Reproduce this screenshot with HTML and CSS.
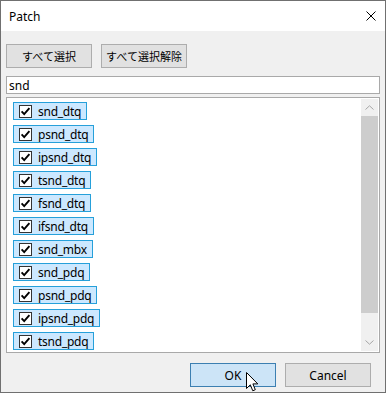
FILE: index.html
```html
<!DOCTYPE html>
<html lang="ja">

<head>
  <meta charset="UTF-8">
  <meta name="viewport" content="width=device-width, initial-scale=1.0">
  <title>Patch</title>
  <link rel="stylesheet" href="styles.css">
</head>

<body>

  <svg class="defs" width="0" height="0">
    <symbol id="tick" viewBox="0 0 11 11">
      <path d="M1.6 5.4 L4.2 8.2 L9.4 2.2" fill="none" stroke="#000" stroke-width="1.9"/>
    </symbol>
  </svg>

  <div class="window">
    <!-- Title bar -->
    <div class="titlebar">
      <span class="title">Patch</span>
      <svg class="close" width="10" height="10" viewBox="0 0 10 10">
        <path d="M0.5 0.5 L9.5 9.5 M9.5 0.5 L0.5 9.5" stroke="#000" stroke-width="1"/>
      </svg>
    </div>

    <div class="client">
      <div class="toolbar">
        <button class="btn jp">すべて選択</button>
        <button class="btn jp">すべて選択解除</button>
      </div>

      <input class="filter" type="text" value="snd">

      <!-- Checked list -->
      <div class="listbox">
        <div class="items">
          <label class="item"><span class="box"><svg><use href="#tick"/></svg></span>snd_dtq</label>
          <label class="item"><span class="box"><svg><use href="#tick"/></svg></span>psnd_dtq</label>
          <label class="item"><span class="box"><svg><use href="#tick"/></svg></span>ipsnd_dtq</label>
          <label class="item"><span class="box"><svg><use href="#tick"/></svg></span>tsnd_dtq</label>
          <label class="item"><span class="box"><svg><use href="#tick"/></svg></span>fsnd_dtq</label>
          <label class="item"><span class="box"><svg><use href="#tick"/></svg></span>ifsnd_dtq</label>
          <label class="item"><span class="box"><svg><use href="#tick"/></svg></span>snd_mbx</label>
          <label class="item"><span class="box"><svg><use href="#tick"/></svg></span>snd_pdq</label>
          <label class="item"><span class="box"><svg><use href="#tick"/></svg></span>psnd_pdq</label>
          <label class="item"><span class="box"><svg><use href="#tick"/></svg></span>ipsnd_pdq</label>
          <label class="item"><span class="box"><svg><use href="#tick"/></svg></span>tsnd_pdq</label>
        </div>
        <div class="scrollbar">
          <div class="arrow">
            <svg width="9" height="5" viewBox="0 0 9 5"><path d="M0.5 4.5 L4.5 0.8 L8.5 4.5" fill="none" stroke="#a6a6a6"/></svg>
          </div>
          <div class="thumb"></div>
          <div class="track"></div>
          <div class="arrow">
            <svg width="9" height="5" viewBox="0 0 9 5"><path d="M0.5 0.5 L4.5 4.2 L8.5 0.5" fill="none" stroke="#a6a6a6"/></svg>
          </div>
        </div>
      </div>

      <div class="footer">
        <button class="btn default">OK</button>
        <button class="btn">Cancel</button>
      </div>
    </div>

    <!-- mouse pointer over OK -->
    <svg class="pointer" width="13" height="20" viewBox="0 0 13 20">
      <path d="M0.5 0.5 L0.5 16.5 L4.3 12.8 L6.8 18.8 L9.3 17.7 L6.9 11.9 L11.8 11.9 Z" fill="#fff" stroke="#000" stroke-width="1" stroke-linejoin="miter"/>
    </svg>
  </div>

</body>

</html>
```

FILE: styles.css
```css
/* Global */
* {
  margin: 0;
  padding: 0;
  box-sizing: border-box;
}

body {
  background: #fff;
  font-family: "Noto Sans", "Noto Sans CJK JP", sans-serif;
  font-size: 12px;
  color: #000;
}

.defs {
  position: absolute;
}

/* Window frame */
.window {
  position: relative;
  width: 386px;
  height: 393px;
  border: 1px solid #707070;
  background: #f0f0f0;
  display: flex;
  flex-direction: column;
}

.titlebar {
  height: 30px;
  background: #fff;
  display: flex;
  align-items: center;
  justify-content: space-between;
  padding: 0 9px 0 8px;
}

.title {
  font-size: 12px;
}

/* Client area */
.client {
  flex: 1;
  padding: 13px 5px 0 5px;
  display: flex;
  flex-direction: column;
}

.toolbar {
  display: flex;
  gap: 9px;
}

.btn {
  width: 86px;
  height: 24px;
  border: 1px solid #adadad;
  background: #e1e1e1;
  font-family: "Noto Sans", "Noto Sans CJK JP", sans-serif;
  font-size: 12px;
  color: #000;
}

.btn.jp {
  font-size: 11px;
}

.btn.default {
  background: #cce4f7;
  border-color: #3c7fb1;
}

.filter {
  margin-top: 8px;
  height: 18px;
  border: 1px solid #a9a9a9;
  background: #fff;
  padding: 0 2px;
  font-family: "Noto Sans", sans-serif;
  font-size: 12px;
  outline: none;
}

/* List box */
.listbox {
  margin-top: 3px;
  height: 256px;
  border: 1px solid #a9a9a9;
  background: #fff;
  padding: 1px;
  display: flex;
}

.items {
  flex: 1;
  overflow: hidden;
  padding: 3px 0 0 5px;
  display: flex;
  flex-direction: column;
  align-items: flex-start;
  gap: 5px;
}

.item {
  height: 18px;
  flex-shrink: 0;
  display: inline-flex;
  align-items: center;
  border: 1px solid #26a0da;
  background: #cce8ff;
  padding: 0 5px;
  white-space: nowrap;
  letter-spacing: -0.25px;
}

.box {
  width: 13px;
  height: 13px;
  border: 1px solid #333;
  background: #fff;
  margin-right: 6px;
  display: flex;
}

.box svg {
  width: 11px;
  height: 11px;
}

.scrollbar {
  width: 17px;
  background: #f0f0f0;
  display: flex;
  flex-direction: column;
}

.arrow {
  height: 17px;
  display: flex;
  align-items: center;
  justify-content: center;
}

.thumb {
  height: 197px;
  background: #cdcdcd;
}

.track {
  flex: 1;
}

/* Dialog buttons */
.footer {
  margin-top: 10px;
  display: flex;
  justify-content: flex-end;
  gap: 9px;
  padding-right: 9px;
}

.pointer {
  position: absolute;
  left: 245px;
  top: 371px;
}
```
